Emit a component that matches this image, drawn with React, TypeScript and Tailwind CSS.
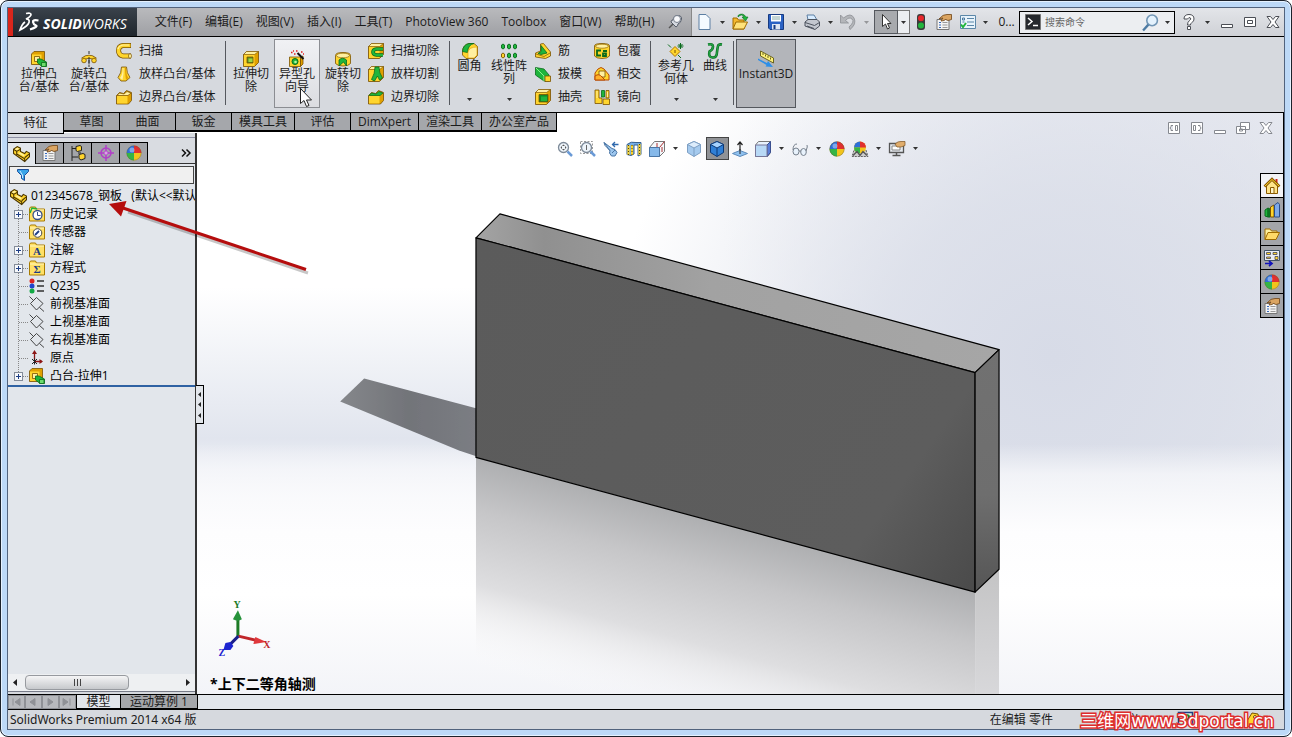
import type { ReactNode } from "react";
import clsx from "clsx";

const Y = "#ffd52e";
const YL = "#fff0a0";
const YD = "#e0a000";
const O = "#7a5200";
const G = "#1fb53c";
const GD = "#0a6b1c";

const Svg = ({ children, className = "size-4", box = "0 0 16 16" }: { children: ReactNode; className?: string; box?: string }) => (
  <svg viewBox={box} className={clsx("shrink-0 overflow-visible", className)} fill="none" aria-hidden="true">
    {children}
  </svg>
);

const Caret = ({ className = "" }: { className?: string }) => (
  <svg viewBox="0 0 5 3" width="5" height="3" className={clsx("shrink-0", className)} aria-hidden="true">
    <path d="M0 0h5L2.5 3z" fill="#333" />
  </svg>
);

const Cube = ({ inner }: { inner?: ReactNode }) => (
  <>
    <path d="M.5 3.500l3-3h12v11l-4 4H.5z" fill={YD} stroke={O} strokeWidth=".8" />
    <path d="M.5 3.500l3-3h12l-4 3z" fill={YL} stroke={O} strokeWidth=".6" />
    <path d="M1 4h10.500v11H1z" fill={Y} />
    {inner}
  </>
);

/* ribbon icons */
const ExtrudeIcon = () => (
  <Svg>
    <path d="M.5 3l2.500-2.500h10.500v10L10.500 13.500H.5z" fill={YD} stroke={O} strokeWidth=".8" />
    <path d="M1 3.500h9.500V13H1z" fill={Y} />
    <path d="M3.500 5.500h5v5h-5z" fill={YL} stroke={O} strokeWidth=".8" />
    <path d="M6.500 8h3.500l5.500 3v4.500h-4.500L6.500 12z" fill={G} stroke={GD} strokeWidth=".8" />
    <path d="M10.500 11.500h4.500v4h-4.500z" fill="#6ddc6e" stroke={GD} strokeWidth=".8" />
  </Svg>
);
const RevolveIcon = () => (
  <Svg>
    <path d="M8 0v16" stroke="#333" strokeDasharray="3 1.500" />
    <path d="M1.500 8.500Q8 3 14.500 8.500" stroke={O} strokeWidth="4" />
    <path d="M1.500 8.500Q8 3 14.500 8.500" stroke={Y} strokeWidth="2.500" />
    <circle cx="3" cy="9.500" r="2.300" fill={Y} stroke={O} strokeWidth=".8" />
    <circle cx="13" cy="9.500" r="2.300" fill={Y} stroke={O} strokeWidth=".8" />
    <path d="M8 6v7" stroke="#333" />
  </Svg>
);
const SweepIcon = () => (
  <Svg>
    <path d="M15 2.500H7Q2.500 3 2.500 7.500T7 13h8" stroke={O} strokeWidth="5" />
    <path d="M14.500 2.500H7Q2.500 3 2.500 7.500T7 13h7.500" stroke={Y} strokeWidth="3.600" />
    <path d="M13 2H7Q3 2.500 2 6" stroke={YL} strokeWidth="1.200" />
    <ellipse cx="14" cy="13" rx="1.500" ry="2.300" fill={YL} stroke={O} strokeWidth=".7" />
  </Svg>
);
const LoftIcon = () => (
  <Svg>
    <path d="M5.500 1h5q0 6 3.500 10.500l-4 3.500H5l-3-3.500Q5.500 7 5.500 1z" fill={Y} stroke={O} strokeWidth=".8" />
    <path d="M6.500 2q.5 6-2.500 10l2.500 2q1.500-6 1-12z" fill={YL} />
    <path d="M10 2q0 7 2.500 10L10 14q-1-6-1-12z" fill={YD} />
  </Svg>
);
const BoundaryIcon = ({ green }: { green?: boolean }) => (
  <Svg>
    <path d="M.5 6.500l3-3 4 1 3-3 5 2v8l-3 3.500H.5z" fill={YD} stroke={O} strokeWidth=".8" />
    <path d="M1 7h10.500v7.500H1z" fill={Y} />
    <path d="M1 6.500L3.500 4l4.500 1 3-2.500 4 1.500-3 2.500z" fill={green ? G : YL} stroke={green ? GD : O} strokeWidth=".7" />
  </Svg>
);
const CutExtrudeIcon = () => (
  <Svg>
    <Cube inner={<><path d="M4 6h6v6H4z" fill="#578b1e" stroke={O} strokeWidth=".8" /><path d="M5.500 7.500h4V11h-4z" fill="#9ed545" /></>} />
  </Svg>
);
const HoleWizardIcon = () => (
  <Svg>
    <path d="M.5 6h11v9.500H.5z" fill={Y} stroke={O} strokeWidth=".8" />
    <path d="M11.500 6l2.500-1v8l-2.500 2.500z" fill={YD} stroke={O} strokeWidth=".8" />
    <circle cx="6" cy="10.500" r="3" fill={G} stroke={GD} />
    <circle cx="6.500" cy="11" r="1.300" fill="#b7f5a0" />
    <path d="M8.500 2l6 6" stroke="#111" strokeWidth="2" />
    <path d="M2 1.500h1.500M5 3h1.500M4 0h1M7 0h1.500M12 1h1.500M14 3h1" stroke="#e02020" strokeWidth="1.400" />
  </Svg>
);
const CutRevolveIcon = () => (
  <Svg>
    <path d="M.5 4.500q0-3 7.500-3t7.500 3v8q-2 2.500-7.500 2.500T.5 12.500z" fill={Y} stroke={O} strokeWidth=".8" />
    <ellipse cx="8" cy="4.500" rx="6.500" ry="2.300" fill={YL} stroke={O} strokeWidth=".6" />
    <path d="M4 15V9q3.500-3.500 7.500 0v6l-3-4z" fill={G} stroke={GD} strokeWidth=".8" />
  </Svg>
);
const CutSweepIcon = () => (
  <Svg>
    <Cube inner={<path d="M15 6H8.500Q5 6.500 5 9t3.500 3H15" stroke={GD} strokeWidth="3.600" />} />
    <path d="M15 6H8.500Q5 6.500 5 9t3.500 3H15" stroke={G} strokeWidth="2.200" />
  </Svg>
);
const CutLoftIcon = () => (
  <Svg>
    <Cube />
    <path d="M7 1h4q0 6 3.500 11l-3 2-2-4-3 5-3-1.500Q7 7.500 7 1z" fill={G} stroke={GD} strokeWidth=".8" />
  </Svg>
);
const FilletIcon = () => (
  <Svg>
    <path d="M.5 8Q1 2 7 .5h5l3.500 3v9l-3 3H4L.5 12z" fill={Y} stroke={O} strokeWidth=".8" />
    <path d="M.5 8.500Q1 1.500 7 .5h5q-6 1-6.500 9z" fill={G} stroke={GD} strokeWidth=".8" />
    <path d="M6 9Q7 4 15 4v8l-3 3H6z" fill={YL} stroke={YD} strokeWidth=".6" />
  </Svg>
);
const PatternIcon = () => (
  <Svg>
    {[2, 8, 14].map((x) => (
      <g key={x}>
        <path d={`M${x - 1.500} 2q1.500-2 3 0v3q-1.500 2-3 0z`} fill={G} stroke={GD} strokeWidth=".9" />
        <path d={`M${x - 1.500} 11q1.500-2 3 0v3q-1.500 2-3 0z`} fill={x === 2 ? Y : G} stroke={x === 2 ? O : GD} strokeWidth=".9" />
      </g>
    ))}
  </Svg>
);
const RibIcon = () => (
  <Svg>
    <path d="M.5 10l5-2V1l3-.5L15.500 9v4l-5 2.500L.5 14z" fill={Y} stroke={O} strokeWidth=".8" />
    <path d="M6 2.500l6 7.500-6 1.500-3-1 3-2z" fill={G} stroke={GD} strokeWidth=".8" />
    <path d="M1 11l8 2.500L15 10" stroke={O} strokeWidth=".7" />
  </Svg>
);
const DraftIcon = () => (
  <Svg>
    <path d="M.5 1.500L9 3l5 6v6H9L.5 9z" fill={G} stroke={GD} strokeWidth=".8" />
    <path d="M1 2l8 8V15" stroke="#8eef8c" />
    <path d="M10 10h5.500v5.500H10z" fill={Y} stroke={O} strokeWidth=".8" />
  </Svg>
);
const ShellIcon = () => (
  <Svg>
    <Cube inner={<path d="M4 5.500h9V13H4z" fill="#118a25" stroke={O} strokeWidth=".8" />} />
    <path d="M6 7.500h6V12H6z" fill={G} />
  </Svg>
);
const WrapIcon = () => (
  <Svg>
    <path d="M.5 3q0-2.500 7.500-2.500T15.500 3v10q-2 2.500-7.500 2.500T.5 13z" fill={Y} stroke={O} strokeWidth=".8" />
    <ellipse cx="8" cy="3.200" rx="6.500" ry="2" fill={YL} stroke={O} strokeWidth=".6" />
    <path d="M7 7.500H3v5h4M9 8h4M9 10.500h3V13H9z" stroke={GD} strokeWidth="1.800" />
  </Svg>
);
const IntersectIcon = () => (
  <Svg>
    <path d="M1 7l3-4q3-3 6 0l5 6v5H1z" fill={Y} stroke="#b84a00" />
    <path d="M5 5h6v6H5z" fill={YL} stroke={O} strokeWidth=".8" />
    <path d="M1 10q4-3 7 1l3 3H1z" fill="#ffb02a" stroke="#b84a00" />
  </Svg>
);
const MirrorIcon = () => (
  <Svg>
    <path d="M1 1h4v8h3v5.500H1z" fill={Y} stroke={O} strokeWidth=".8" />
    <path d="M7.500 1.500h3v6.500h-3z" fill={G} stroke={GD} strokeWidth=".8" />
    <path d="M12 1.500h3V9h-3zM9 10h6.500v5.500H9z" fill={Y} stroke={O} strokeWidth=".8" />
    <path d="M3 2v7M13.500 3v5" stroke={YL} />
  </Svg>
);
const RefGeomIcon = () => (
  <Svg>
    <path d="M7 3.500L12 8.500 7 13.500 2 8.500z" fill={Y} stroke="#b07800" />
    <path d="M7 7v3" stroke={O} />
    <path d="M0 1.500l3 3M10 12l3 3M12.500 0v6M9.500 3h6M10.500 1l4 4M14.500 1l-4 4" stroke={GD} />
  </Svg>
);
const CurveIcon = () => (
  <Svg>
    <path d="M1 1.500q5-1 5 2t-3.500 5Q1 14 5.500 14.500T10 9q.5-4 1-6t4-1.500" stroke={GD} strokeWidth="2.600" />
    <path d="M1 1.500q5-1 5 2t-3.500 5Q1 14 5.500 14.500T10 9q.5-4 1-6t4-1.500" stroke="#22a045" strokeWidth="1.400" />
  </Svg>
);
const InstantIcon = () => (
  <Svg>
    <path d="M2.500 0l13 7v5L2.500 5z" fill="#fff27a" stroke="#6b6420" />
    <path d="M5 2v2M7.500 3.500v2M10 5v2M12.500 6.500v2" stroke="#6b6420" />
    <path d="M0 7.500L9 12l1-2 5 6-7.500-.5 1-1.500L0 9z" fill="#2d8fe8" />
  </Svg>
);

/* shared icons */
const BallIcon = () => (
  <Svg>
    <circle cx="8" cy="8" r="7.500" fill="#f2c41c" />
    <path d="M8 8V.5A7.500 7.500 0 0 0 .5 8z" fill="#2d6fd8" />
    <path d="M8 8V.5A7.500 7.500 0 0 1 15.500 8z" fill="#e03030" />
    <path d="M8 8H.5A7.500 7.500 0 0 0 8 15.500z" fill="#35b545" />
    <circle cx="6" cy="5" r="2.500" fill="#fff" opacity=".4" />
    <circle cx="8" cy="8" r="7.200" stroke="#555" strokeOpacity=".5" strokeWidth=".7" />
  </Svg>
);
const PartIcon = () => (
  <Svg className="size-[17px]">
    <path d="M.5 4L4 1.500l3 1.500v3l4 2 1.500-2 3 1.500v3.500L11 15.500.5 8z" fill={Y} stroke="#4a3500" />
    <path d="M.5 4l3 2v3.500M3.500 6L7 4M3.500 8.500L11 13v2.500M11 12l4-3.500" stroke="#4a3500" />
    <path d="M1.500 4L4 2.500 6 3.500 3.500 5zM7 7l4 2.500-1 1L4.500 7.500z" fill={YL} />
  </Svg>
);
const PropsIcon = () => (
  <Svg>
    <path d="M1 5.500h12v10H1z" fill="#f4f4f4" stroke="#777" />
    <path d="M3 8.500h2M3 11h2M3 13.500h2" stroke="#3366bb" />
    <path d="M6.500 8.500h5M6.500 11h5M6.500 13.500h5" stroke="#999" />
    <path d="M3 5Q7 0 11 .5h4.500v5L12 6.500q-3-2-4 0L5 7q1-2 2-3z" fill="#dba562" stroke="#6f4415" strokeWidth=".8" />
  </Svg>
);
const FolderIcon = () => (
  <Svg>
    <path d="M1 13.500V3h5l1.500 2H13v2" fill={YL} stroke="#a06c00" />
    <path d="M1 13.500L4 6.500h11.500L12 13.500z" fill="#ffd968" stroke="#a06c00" />
  </Svg>
);

const LargeTool = ({ icon, lines, className, top, caret, children }: { icon: ReactNode; lines: string[]; className: string; top?: boolean; caret?: boolean; children?: ReactNode }) => (
  <button type="button" className={clsx("relative flex h-[69px] flex-col items-center border text-center leading-[13px]", top ? "pt-[3px]" : "pt-[11px]", className)}>
    {icon}
    {lines.map((l) => (
      <span key={l} className="whitespace-nowrap">{l}</span>
    ))}
    {caret && <Caret className="mt-auto mb-1.5" />}
    {children}
  </button>
);

const SmallTools = ({ items, className }: { items: [ReactNode, string][]; className?: string }) => (
  <div className={clsx("flex flex-col", className)}>
    {items.map(([icon, label]) => (
      <button key={label} type="button" className="flex h-[23px] items-center gap-[7px] whitespace-nowrap">
        {icon}
        {label}
      </button>
    ))}
  </div>
);

const Divider = () => <div className="mt-0.5 h-16 w-px shrink-0 bg-[#55585e]" />;

const MENUS = ["文件(F)", "编辑(E)", "视图(V)", "插入(I)", "工具(T)", "PhotoView 360", "Toolbox", "窗口(W)", "帮助(H)"];
const TABS = ["特征", "草图", "曲面", "钣金", "模具工具", "评估", "DimXpert", "渲染工具", "办公室产品"];

const TitleTool = ({ label, children, className = "w-5" }: { label: string; children: ReactNode; className?: string }) => (
  <button type="button" aria-label={label} className={clsx("flex h-6 shrink-0 items-center justify-center", className)}>
    {children}
  </button>
);

const WindowGlyph = ({ kind, color = "#4b4e55" }: { kind: string; color?: string }) => (
  <Svg className="size-3.5" box="0 0 14 14">
    <g stroke={color} fill="#fff">
      {kind === "min" && <path d="M1.500 9.500h11v3h-11z" />}
      {kind === "max" && <path d="M1.500 2.500h11v9h-11zM4.500 5.500h5v3h-5z" />}
      {kind === "restore" && <path d="M4.500 1.500h9v7h-9zM.5 5.500h9v7h-9zM3.500 8h3v2h-3z" />}
      {kind === "close" && <path d="M1 1.500h3.500L7 4.500l2.500-3H13L9 7l4 5.500H9.500L7 9.500l-2.500 3H1L5 7z" />}
      {kind === "left" && <path d="M1.500 1.500h11v11h-11zM8.500 4.500h2v5h-2zM6 4.500H4v1L3 7l1 1.500v1h2" />}
      {kind === "right" && <path d="M1.500 1.500h11v11h-11zM3.500 4.500h2v5h-2zM8 4.500h2v1L11 7l-1 1.500v1H8" />}
    </g>
  </Svg>
);

const TitleBar = () => (
  <header className="flex h-7 shrink-0 items-stretch bg-gradient-to-b from-[#e3e5e9] to-[#cfd1d6]">
    <div className="flex items-center gap-1 border-l-[5px] border-[#d9261c] bg-gradient-to-b from-[#3a424b] to-[#1f262d] pr-2.5 pl-1.5 text-white">
      <Svg className="h-5 w-5" box="0 0 20 20">
        <path d="M7 1.500q5-1 5 1T7 7q4 0 3 3.500T1 18q2-6 5-8" stroke="#fff" strokeWidth="1.700" />
        <path d="M19.500 8.500q-6-1-5.500 1.500t3 3.500-6 4" stroke="#fff" strokeWidth="2.200" />
      </Svg>
      <span className="mt-1 text-[14px] leading-4 italic"><b>SOLID</b>WORKS</span>
    </div>
    <nav className="flex items-center gap-[13px] border-r border-[#888] bg-gradient-to-b from-[#b9babd] to-[#9fa0a4] pr-2 pl-[18px] whitespace-nowrap">
      {MENUS.map((m) => (
        <button key={m} type="button">{m}</button>
      ))}
      <button type="button" aria-label="固定">
        <Svg>
          <path d="M2 14l4-4" stroke="#555" strokeWidth="1.500" />
          <path d="M4 8l5 5q2-1 2-3 3-1 3.500-5T9 1.500Q6 3 6 6 4 6 4 8z" fill="#d5d9e0" stroke="#555c68" />
          <circle cx="10" cy="5" r="3.500" fill="#f8f9fb" stroke="#777f8c" />
        </Svg>
      </button>
    </nav>
    <div className="flex items-center pl-0.5">
      {[
        ["新建", <path key="n" d="M3 .5h7l4 4v11H3z" fill="#f4faff" stroke="#5c7fa3" />],
        ["打开", <g key="o"><path d="M1 15V4h4l1.500 2H12v9z" fill="#f5b82e" stroke="#a06c00" /><path d="M1 15l3-7h11.500L12 15z" fill="#ffe27a" stroke="#a06c00" /><path d="M6 3q4-4 6 0h-2l3.500 4L16 3h-2Q11-2 6 1.500z" fill={G} stroke={GD} strokeWidth=".6" /></g>],
        ["保存", <g key="s"><path d="M.5.5h15v15H2l-1.500-1.500z" fill="#2b62c4" stroke="#173a80" /><path d="M3 1h10v6.500H3z" fill="#fff" /><path d="M4 3h8M4 5h8" stroke="#8aa" /><path d="M4 10h8v5.500H4z" fill="#dfe6f2" /><path d="M5.500 11h2v4h-2z" fill="#173a80" /></g>],
        ["打印", <g key="p"><path d="M4 6L3 1h7l3 5z" fill="#d8ecff" stroke="#5c7fa3" /><path d="M1 8l3-2.500h9l2.500 2.500v4L11 15.500 1 12z" fill="#c3c7cf" stroke="#4d535e" /><path d="M1 8.500l9.500 3 5-3M3 12l7 2.500" stroke="#4d535e" /></g>],
        ["撤销", <path key="u" d="M.5 1v8h8L5.500 6.500Q9 2.500 12 5t-3 8l1 2.500Q17 10 14 4T3.500 4z" fill="#b4b6ba" stroke="#8d8f94" strokeWidth=".8" />],
      ].map(([label, art]) => (
        <div key={label as string} className="flex items-center">
          <TitleTool label={label as string}><Svg>{art}</Svg></TitleTool>
          <button type="button" aria-label={`${label}选项`} className={clsx("flex w-4 justify-center", label === "撤销" && "opacity-40")}><Caret /></button>
        </div>
      ))}
      <TitleTool label="选择" className="w-6 border border-[#55585e] bg-[#a8aaae]">
        <Svg><path d="M4.500.5v12l3-2.500 2 5 2-1-2-4.500h3.500z" fill="#fff" stroke="#333" /></Svg>
      </TitleTool>
      <TitleTool label="选择选项" className="w-3 border border-l-0 border-[#777] bg-[#eceef1]"><Caret /></TitleTool>
      <TitleTool label="重建模型" className="w-[22px]">
        <Svg>
          <rect x="4" y="0" width="8" height="16" rx="3" fill="#3a3a3a" />
          <circle cx="8" cy="4.200" r="3" fill="#e8262b" />
          <circle cx="8" cy="11.500" r="3" fill="#22b53c" />
        </Svg>
      </TitleTool>
      <TitleTool label="文件属性" className="w-6"><PropsIcon /></TitleTool>
      <TitleTool label="选项" className="w-6">
        <Svg><path d="M.5 1.500h15v13H.5z" fill="#e8f3fb" stroke="#5b87a8" /><path d="M2.500 4h2v2h-2zM2.500 8h2" stroke="#4a7aa0" /><path d="M7 4.500h7M7 8h7M7 11.500h7" stroke="#5b87a8" /><path d="M1 10.500l2 2.500 3-4" stroke={G} strokeWidth="2" /></Svg>
      </TitleTool>
      <button type="button" aria-label="更多" className="flex w-2.5 justify-center"><Caret /></button>
      <span className="pl-2">0...</span>
    </div>
    <div className="ml-auto flex items-center">
      <label className="flex h-[23px] w-[156px] items-center border border-black bg-[#eceef1] pr-1 pl-[5px]">
        <Svg><path d="M.5.5h15v15H.5z" fill="#26292e" stroke="#777" /><path d="M3 4l4 3.500L3 11M8 11.500h5" stroke="#fff" strokeWidth="1.500" /></Svg>
        <input aria-label="搜索命令" placeholder="搜索命令" className="min-w-0 flex-1 bg-transparent pl-1 text-[10px] outline-none placeholder:text-[#666]" />
        <Svg className="size-[17px]"><circle cx="9.500" cy="6" r="5" fill="#e4f2fd" stroke="#7296b5" strokeWidth="1.500" /><path d="M6 10l-5 5.500" stroke="#4d7ba3" strokeWidth="2.200" /></Svg>
        <Caret className="ml-1.5" />
      </label>
      <TitleTool label="帮助" className="ml-1 w-5">
        <Svg><path d="M3 5Q3 .5 8 .5T13 5q0 2-2 3.500T9.500 11h-3q0-3 2-4.500T9.500 4Q8 2.500 6.500 5zM6.500 12.500h3v3h-3z" fill="#fff" stroke="#4b4e55" /></Svg>
      </TitleTool>
      <button type="button" aria-label="帮助选项" className="flex w-4 justify-center"><Caret /></button>
      <TitleTool label="最小化" className="w-[23px]"><WindowGlyph kind="min" /></TitleTool>
      <TitleTool label="最大化" className="w-[23px]"><WindowGlyph kind="max" /></TitleTool>
      <TitleTool label="关闭" className="w-[23px]"><WindowGlyph kind="close" /></TitleTool>
    </div>
  </header>
);

const Ribbon = () => (
  <div className="flex h-[77px] shrink-0 items-start border-y border-t-black border-b-black bg-[#d6d9de] pt-0.5 pl-1.5">
    <LargeTool icon={<ExtrudeIcon />} lines={["拉伸凸", "台/基体"]} className="w-[50px] border-transparent" />
    <LargeTool icon={<RevolveIcon />} lines={["旋转凸", "台/基体"]} className="w-[50px] border-transparent" />
    <SmallTools className="w-[111px] pl-0.5" items={[[<SweepIcon />, "扫描"], [<LoftIcon />, "放样凸台/基体"], [<BoundaryIcon />, "边界凸台/基体"]]} />
    <Divider />
    <LargeTool icon={<CutExtrudeIcon />} lines={["拉伸切", "除"]} className="ml-[2px] w-[46px] border-transparent" />
    <LargeTool icon={<HoleWizardIcon />} lines={["异型孔", "向导"]} className="w-[46px] border-[#8b8d92] bg-gradient-to-b from-[#f0f1f4] to-[#dcdde1]">
      <Svg className="absolute top-12 left-[25px] h-5 w-3" box="0 0 12 20">
        <path d="M.5.5v15l3.500-3 2.500 6 2.500-1-2.500-5.500h5z" fill="#fff" stroke="#222" />
      </Svg>
    </LargeTool>
    <LargeTool icon={<CutRevolveIcon />} lines={["旋转切", "除"]} className="w-[46px] border-transparent" />
    <SmallTools className="w-[83px] pl-0.5" items={[[<CutSweepIcon />, "扫描切除"], [<CutLoftIcon />, "放样切割"], [<BoundaryIcon green />, "边界切除"]]} />
    <Divider />
    <LargeTool top caret icon={<FilletIcon />} lines={["圆角"]} className="w-[39px] border-transparent" />
    <LargeTool top caret icon={<PatternIcon />} lines={["线性阵", "列"]} className="w-[40px] border-transparent" />
    <SmallTools className="w-[59px] pl-1.5" items={[[<RibIcon />, "筋"], [<DraftIcon />, "拔模"], [<ShellIcon />, "抽壳"]]} />
    <SmallTools className="w-[62px] pl-1.5" items={[[<WrapIcon />, "包覆"], [<IntersectIcon />, "相交"], [<MirrorIcon />, "镜向"]]} />
    <Divider />
    <LargeTool top caret icon={<RefGeomIcon />} lines={["参考几", "何体"]} className="ml-1 w-[42px] border-transparent" />
    <LargeTool top caret icon={<CurveIcon />} lines={["曲线"]} className="w-9 border-transparent" />
    <Divider />
    <LargeTool icon={<InstantIcon />} lines={["Instant3D"]} className="ml-0.5 w-[60px] border-[#55585e] bg-[#b3b5ba]" />
  </div>
);

const Branch = ({ plus, last }: { plus?: boolean; last?: boolean }) => (
  <svg width="20" height="18" className="shrink-0" aria-hidden="true">
    <path d={last ? "M9.500 0v9" : "M9.500 0v18"} stroke="#888" strokeDasharray="1 1" />
    <path d="M10 9.500h9" stroke="#888" strokeDasharray="1 1" />
    {plus && (
      <>
        <rect x="5.500" y="5.500" width="8" height="8" fill="#f6f8fb" stroke="#848c99" />
        <path d="M7 9.500h5M9.500 7v5" stroke="#1d3d85" />
      </>
    )}
  </svg>
);

const TreeFolder = ({ children }: { children: ReactNode }) => (
  <Svg>
    <path d="M.5 15V2.500l1-1.500h5l1 2h8v12z" fill="#ffe066" stroke="#a87b00" />
    <path d="M1 4h14" stroke="#fff6c0" />
    {children}
  </Svg>
);

const PlaneIcon = () => (
  <Svg><path d="M7.500 1.500l6.500 6-6.500 6.500-6-6.500zM.5.5l4 4M10.500 11.500l4.500 4" stroke="#333" strokeWidth=".9" /></Svg>
);

const TREE: { label: string; icon: ReactNode; plus?: boolean }[] = [
  { label: "历史记录", plus: true, icon: <TreeFolder><circle cx="8.500" cy="9" r="4.500" fill="#fff" stroke="#334d8c" strokeWidth="1.300" /><path d="M8.500 6v3.500h3" stroke="#334d8c" /><path d="M1 7l2-5 5 1" stroke={G} strokeWidth="1.500" /></TreeFolder> },
  { label: "传感器", icon: <TreeFolder><circle cx="8.500" cy="9" r="4.300" fill="#fff" stroke="#444" /><path d="M6 11l4-4" stroke="#1d3d85" strokeWidth="1.800" /></TreeFolder> },
  { label: "注解", plus: true, icon: <TreeFolder><text x="8" y="13" textAnchor="middle" fontSize="11" fontWeight="700" fontFamily="Liberation Serif, serif" fill="#1d3d85">A</text></TreeFolder> },
  { label: "方程式", plus: true, icon: <TreeFolder><text x="8" y="13" textAnchor="middle" fontSize="11" fontWeight="700" fontFamily="Liberation Serif, serif" fill="#1d3d85">Σ</text></TreeFolder> },
  { label: "Q235", icon: <Svg><circle cx="3" cy="3" r="2.500" fill="#d22" /><circle cx="3" cy="8" r="2.500" fill="#24c" /><circle cx="3" cy="13" r="2.500" fill="#1a4" /><path d="M8 3h7M8 8h7M8 13h7" stroke="#333" strokeWidth="1.500" /></Svg> },
  { label: "前视基准面", icon: <PlaneIcon /> },
  { label: "上视基准面", icon: <PlaneIcon /> },
  { label: "右视基准面", icon: <PlaneIcon /> },
  { label: "原点", icon: <Svg><path d="M5.500 11V2M6 11.500h7" stroke="#8c1515" strokeWidth="1.300" /><path d="M5.500 0L8 4H3zM14 11.500L10.500 9v5z" fill="#8c1515" /><path d="M3 9l5 5M8 9l-5 5M5.500 8.500v6" stroke="#222" /></Svg> },
  { label: "凸台-拉伸1", plus: true, icon: <ExtrudeIcon /> },
];

const PANEL_TABS: [string, ReactNode][] = [
  ["设计树", <PartIcon />],
  ["属性", <PropsIcon />],
  ["配置", <Svg><path d="M2 1v15M2 3.500h5M2 12h6M8 8h3" stroke="#222" /><path d="M6 1.500l4-1 1.500 1v4l-4 1L6 5.500zM9 9.500l4-1 2 1v4l-4 1.500-2-1.500z" fill={Y} stroke="#222" /></Svg>],
  ["尺寸专家", <Svg><circle cx="8" cy="8" r="5" stroke="#b13fc8" strokeWidth="1.500" /><path d="M8 0v16M0 8h16" stroke="#b13fc8" strokeWidth="1.500" /><path d="M8 5.500L10.500 8 8 10.500 5.500 8z" fill="#dba2e6" stroke="#b13fc8" /></Svg>],
  ["外观", <BallIcon />],
];

const Sidebar = () => (
  <aside className="relative flex w-[189px] shrink-0 flex-col border-r-2 border-[#333] bg-[#e2e6eb]">
    <div className="h-[9px] shrink-0 bg-[#d9dce1]">
      <div className="h-px w-14 bg-black" />
      <div className="mt-[3px] h-px bg-[#8d8fa3]" />
    </div>
    <div className="flex h-[22px] shrink-0 items-stretch border-b border-[#333] bg-[#d9dce1]">
      {PANEL_TABS.map(([label, icon], i) => (
        <button key={label} type="button" aria-label={label} className={clsx("flex w-7 items-center justify-center border-t border-r border-black", i ? "bg-[#a3a5a9]" : "-mb-px bg-[#e2e6eb]")}>
          {icon}
        </button>
      ))}
      <button type="button" aria-label="展开" className="mr-1 ml-auto">
        <Svg className="size-2.5" box="0 0 10 10"><path d="M1 1.500L4.500 5 1 8.500M5.500 1.500L9 5 5.500 8.500" stroke="#111" strokeWidth="1.500" /></Svg>
      </button>
    </div>
    <label className="mx-px mt-[2px] flex h-[18px] shrink-0 items-center border border-[#444] bg-[#f0f0f0] pl-[7px]">
      <Svg className="size-3" box="0 0 12 12"><path d="M.5.5h11v2L7.500 6.500v5l-3-2v-3L.5 2.500z" fill="#39a4e8" stroke="#1d4f9c" /><path d="M3 2l2.500 4v3" stroke="#cdeaff" /></Svg>
      <input aria-label="过滤" className="min-w-0 flex-1 bg-transparent outline-none" />
    </label>
    <div className="mt-[3px] overflow-hidden border-b-2 border-[#2f62a3] leading-[18px] whitespace-nowrap text-black">
      <div className="flex h-[18px] items-center gap-1 pl-[2px]">
        <PartIcon />
        <span className="whitespace-pre">012345678_钢板   (默认&lt;&lt;默认</span>
      </div>
      <ul>
        {TREE.map((n, i) => (
          <li key={n.label} className="flex h-[18px] items-center pl-px">
            <Branch plus={n.plus} last={i === TREE.length - 1} />
            {n.icon}
            <span className="pl-[5px]">{n.label}</span>
          </li>
        ))}
      </ul>
    </div>
    <button type="button" aria-label="折叠面板" className="absolute top-[252px] -right-[9px] z-10 flex h-[39px] w-2 flex-col items-center justify-evenly border border-l-0 border-black bg-[#e2e6eb]">
      {[0, 1, 2].map((n) => (
        <Svg key={n} className="h-[5px] w-[3px]" box="0 0 3 5"><path d="M3 0v5L0 2.500z" fill="#222" /></Svg>
      ))}
    </button>
    <div className="mt-auto flex h-[17px] items-center bg-[#eef0f2] px-1">
      <Svg className="size-[7px]" box="0 0 7 7"><path d="M5 0v7L1 3.500z" fill="#222" /></Svg>
      <div className="ml-1.5 flex h-[15px] w-[104px] items-center justify-center gap-0.5 rounded-sm border border-[#979a9f] bg-gradient-to-b from-[#f5f5f6] to-[#c7c9cc]">
        <i className="h-[7px] w-px bg-[#444]" />
        <i className="h-[7px] w-px bg-[#444]" />
        <i className="h-[7px] w-px bg-[#444]" />
      </div>
      <Svg className="ml-auto size-[7px]" box="0 0 7 7"><path d="M2 0v7l4-3.500z" fill="#222" /></Svg>
    </div>
    <div className="h-[3px] border-t border-[#777b88] bg-[#d6d9de]" />
  </aside>
);

const Magnify = ({ area }: { area?: boolean }) => (
  <Svg>
    {area && <path d="M.5.5h12v12H.5z" stroke="#999" strokeDasharray="2 1.500" />}
    <circle cx="6.500" cy="6.500" r="5" fill="#eef4fa" stroke="#7d8a99" strokeWidth="1.300" />
    {area ? <path d="M6.500 4v5" stroke="#666" /> : <path d="M6.500 3.500l1.500 1.500H5zM6.500 9.500L8 8H5zM3.500 6.500L5 5v3zM9.500 6.500L8 5v3z" fill="#555" />}
    <path d="M10.500 10.500l4.500 4.500" stroke="#6a9ad6" strokeWidth="2.500" />
  </Svg>
);

const BlueCube = ({ dark }: { dark?: boolean }) => (
  <Svg>
    <path d="M8 .5l6.500 3v8L8 15.500l-6.500-4v-8z" fill={dark ? "#2f7fd6" : "#a5caee"} stroke={dark ? "#0d3a78" : "#7d9fc4"} />
    <path d="M8 .5l6.500 3L8 7 1.500 3.500z" fill={dark ? "#a5d2ff" : "#dcecfb"} stroke={dark ? "#0d3a78" : "#7d9fc4"} />
    <path d="M8 7v8.500" stroke={dark ? "#0d3a78" : "#7d9fc4"} />
  </Svg>
);

const HUD: { label: string; icon: ReactNode; caret?: boolean; on?: boolean }[] = [
  { label: "整屏显示全图", icon: <Magnify /> },
  { label: "局部放大", icon: <Magnify area /> },
  { label: "上一视图", icon: <Svg><path d="M1 1.500l8 6 3 1 2 3-2 3.500H8.500L6.500 12l.5-2z" fill="#9cc6ee" stroke="#4a76a6" /><path d="M1 1.500l1 3 5 5M9 12l3-3" stroke="#4a76a6" /><path d="M15.500 3.500H10M12 1L9.500 3.500 12 6" stroke="#2f69ad" strokeWidth="1.300" /></Svg> },
  { label: "剖面视图", icon: <Svg><path d="M1 3.500Q5 0 10 1.500h5v12l-3 1.500V4H8v9l-3 1.500-4-1z" fill="#76aee6" stroke="#37618f" /><path d="M2.500 4v10M6 4v10M13.500 3v11" stroke={Y} strokeWidth="2.200" /><path d="M2.500 4v10M6 4v10M13.500 3v11" stroke="#554400" strokeDasharray="1 2" /></Svg> },
  { label: "视图定向", caret: true, icon: <Svg><path d="M.5 6.500L5.500.5h10v10l-5 5H.5z" fill="#f5f8fb" stroke="#777" /><path d="M.5 6.500h10v9H.5z" fill="#86b9ea" stroke="#4a76a6" /><path d="M10.500 6.500l5-6M8 2v4M13 6v5" stroke="#a33" /></Svg> },
  { label: "等轴测", icon: <BlueCube /> },
  { label: "带边线上色", on: true, icon: <BlueCube dark /> },
  { label: "正视于", icon: <Svg><path d="M8 12V1M5.500 4L8 1l2.500 3" stroke="#222" strokeWidth="1.200" /><path d="M8 9.500l7.500 3L8 15.500.5 12.500z" fill="#8fc1ef" stroke="#5d8bbb" /><path d="M8 8v5" stroke="#222" /></Svg> },
  { label: "显示样式", caret: true, icon: <Svg><path d="M.5 4l3-3.500h12v11l-3 4H.5z" fill="#e8f2fc" stroke="#777" /><path d="M12 4l3.500-3.500v11L12 15.500z" fill="#5a7ed8" stroke="#3a4f8f" /><path d="M.5 4H12v11.500H.5z" fill="#b8d9f6" stroke="#779" /></Svg> },
  { label: "隐藏/显示项目", caret: true, icon: <Svg><ellipse cx="4" cy="10.500" rx="3" ry="3.500" fill="#e8f2fc" stroke="#76808c" /><ellipse cx="11.500" cy="11" rx="2.800" ry="3.500" fill="#e8f2fc" stroke="#76808c" /><path d="M7 10h2M1 9q0-6 4-6M14 10q2-5 1-6" stroke="#76808c" /></Svg> },
  { label: "编辑外观", icon: <BallIcon /> },
  { label: "应用布景", caret: true, icon: <Svg><path d="M2 9h12l2 6.500H0z" fill="#ccc" stroke="#666" strokeDasharray="2 1" /><circle cx="8" cy="6.500" r="6" fill="#f2c41c" /><path d="M8 6.500V.5a6 6 0 0 0-6 6z" fill="#2d6fd8" /><path d="M8 6.500V.5a6 6 0 0 1 6 6z" fill="#e03030" /><path d="M8 6.500H2a6 6 0 0 0 6 6z" fill="#35b545" /><path d="M1 14.500l4-4 3 4 3-4 4 4" stroke="#555" strokeWidth="1.300" /></Svg> },
  { label: "视图设定", caret: true, icon: <Svg><path d="M.5 2.500h14v9H.5z" fill="#e4e9ef" stroke="#555" strokeWidth="1.300" /><path d="M3 5h8v4H3z" fill="#fff" stroke="#888" /><path d="M7.500 12v2.500M3.500 14.500h8" stroke="#555" strokeWidth="1.500" /><path d="M6 3q3-3 6-2.500h4v4l-4 1.500H8z" fill="#e0ad6c" stroke="#7b5220" strokeWidth=".7" /></Svg> },
];

const TASK_TABS: [string, ReactNode][] = [
  ["资源", <Svg><path d="M2.500 8v7.500h11V8L8 2.500z" fill="#ffe58a" stroke="#8a5a00" /><path d="M11.500 1h2v4h-2z" fill="#c22" /><path d="M.5 8.500L8 1l7.500 7.500" stroke="#8a5a00" strokeWidth="2.500" /><path d="M1 8L8 1.500 15 8" stroke="#ffd52e" /><path d="M6.500 9.500h3.500v6H6.500z" fill="#fff7cc" stroke="#8a5a00" /></Svg>],
  ["设计库", <Svg><path d="M1 8l3-2v9l-3-1z" fill={G} stroke={GD} /><path d="M4 6l2 1v8H4z" fill="#0c8424" stroke={GD} /><path d="M6.500 5L10 3v12H6.500z" fill={Y} stroke={O} /><path d="M10.500 3L14 .5l1.500 2V15h-5z" fill="#7ea9e8" stroke="#2b4d8a" /></Svg>],
  ["文件探索器", <FolderIcon />],
  ["视图调色板", <Svg><path d="M.5.5h15v10H.5z" fill="#e9edf5" stroke="#456" /><path d="M2.500 2.500h4v2h-4zM9 2.500h4v2H9zM2.500 7h4v1.500h-4zM11 6.500h3v3h-3z" fill={Y} stroke="#445" strokeWidth=".8" /><path d="M1 13.500h6M5 11l3 2.500L5 16" stroke="#11b" strokeWidth="1.700" /></Svg>],
  ["外观、布景", <BallIcon />],
  ["自定义属性", <PropsIcon />],
];

const Scene = () => (
  <svg viewBox="197 133 1087 562" className="absolute inset-0 h-full w-full" role="img" aria-label="钢板">
    <defs>
      <linearGradient id="front" x1="476" y1="238" x2="976" y2="593" gradientUnits="userSpaceOnUse">
        <stop offset="0" stopColor="#5b5b5b" />
        <stop offset=".8" stopColor="#5d5d5d" />
        <stop offset="1" stopColor="#4a4a4a" />
      </linearGradient>
      <linearGradient id="top" x1="476" y1="0" x2="1000" y2="0" gradientUnits="userSpaceOnUse">
        <stop offset="0" stopColor="#a4a4a4" />
        <stop offset=".13" stopColor="#909090" />
        <stop offset=".45" stopColor="#a2a2a2" />
        <stop offset="1" stopColor="#a6a6a6" />
      </linearGradient>
      <linearGradient id="side" x1="0" y1="350" x2="0" y2="593" gradientUnits="userSpaceOnUse">
        <stop offset="0" stopColor="#717171" />
        <stop offset=".6" stopColor="#6e6e6e" />
        <stop offset="1" stopColor="#555" />
      </linearGradient>
      <linearGradient id="mirror" x1="476" y1="458" x2="423" y2="655" gradientUnits="userSpaceOnUse">
        <stop offset="0" stopColor="#aeafb1" />
        <stop offset=".25" stopColor="#c6c6c8" />
        <stop offset=".6" stopColor="#dedee0" />
        <stop offset="1" stopColor="#fcfcfd" stopOpacity="0" />
      </linearGradient>
      <linearGradient id="mirrorSide" x1="0" y1="570" x2="0" y2="730" gradientUnits="userSpaceOnUse">
        <stop offset="0" stopColor="#c4c4c5" />
        <stop offset="1" stopColor="#dddde0" />
      </linearGradient>
      <linearGradient id="shade" x1="340" y1="0" x2="476" y2="0" gradientUnits="userSpaceOnUse">
        <stop offset="0" stopColor="#85878b" />
        <stop offset=".5" stopColor="#727479" />
        <stop offset="1" stopColor="#7b7d83" />
      </linearGradient>
      <filter id="soft"><feGaussianBlur stdDeviation="0.7" /></filter>
    </defs>
    <path d="M364 379l113 30v48l-18-6-119-49z" fill="url(#shade)" filter="url(#soft)" />
    <path d="M476 458l500 135v102H476z" fill="url(#mirror)" />
    <path d="M976 593l24-23v125h-24z" fill="url(#mirrorSide)" />
    <g stroke="#000" strokeWidth="1.200" strokeLinejoin="round">
      <path d="M476 238l24-24 500 136-24 23z" fill="url(#top)" />
      <path d="M476 238l500 135v220L476 458z" fill="url(#front)" />
      <path d="M976 373l24-23v220l-24 23z" fill="url(#side)" />
    </g>
    <g strokeWidth="3">
      <path d="M237.500 637V620" stroke="#1d7a26" />
      <path d="M237.500 611l-5 9q5 3 9 0z" fill="#26933a" />
      <path d="M238 637l19 4.500" stroke="#c0262a" />
      <path d="M266 643l-11-5-2 7z" fill="#e0383c" />
      <path d="M238 637l-8 8" stroke="#1b1f8c" />
      <path d="M223 651l2-7 5-1 3 4-3 4z" fill="#1c24d0" />
    </g>
    <g fontFamily="Liberation Serif, serif" fontSize="10" fontWeight="700">
      <text x="233" y="609" fill="#1d7a26">Y</text>
      <text x="263" y="649" fill="#c0262a">X</text>
      <text x="218" y="657" fill="#1c24d0">Z</text>
    </g>
  </svg>
);

const Viewport = () => (
  <main className="relative flex min-w-0 flex-1 flex-col">
    <Scene />
    <div className="relative flex items-center justify-center pt-1 pr-1">
      {HUD.map((t) => (
        <div key={t.label} className="flex items-center">
          <button type="button" aria-label={t.label} className={clsx("flex size-[23px] items-center justify-center", t.on && "border border-[#444] bg-[#909296]")}>{t.icon}</button>
          {t.caret && <button type="button" aria-label={`${t.label}选项`} className="flex w-[14px] justify-center"><Caret /></button>}
        </div>
      ))}
    </div>
    <div className="absolute top-10 right-0 flex flex-col border-b border-l border-black">
      {TASK_TABS.map(([label, icon], i) => (
        <button key={label} type="button" aria-label={label} className={clsx("flex h-6 w-[22px] items-center justify-center border-t border-black", i ? "bg-[#a3a5a9]" : "bg-[#f2f3f6]")}>{icon}</button>
      ))}
    </div>
    <p className="relative mt-auto pl-[13px] text-[14px] leading-5 font-bold text-black">*上下二等角轴测</p>
  </main>
);

const App = () => {
  return (
    <div className="flex h-screen flex-col rounded-lg border border-[#1c222b] bg-[#bdd9f7] p-1.5 text-[12px] leading-4 text-[#1b1b1b] shadow-[inset_0_0_0_1px_#e6f2ff] [font-family:'Open_Sans','Noto_Sans_CJK_SC',sans-serif]">
      <div className="flex min-h-0 flex-1 flex-col border border-[#52637d]">
        <TitleBar />
        <Ribbon />
        <div className="relative flex min-h-0 flex-1 flex-col border-r border-black bg-[radial-gradient(ellipse_440px_400px_at_82%_42%,#d7dbe7_0%,#d9dde8cc_40%,#ffffff00_100%),radial-gradient(ellipse_560px_420px_at_100%_20%,#e6e8ef_0%,#e8eaf1cc_50%,#ffffff00_100%),linear-gradient(to_bottom,#ffffff_0%,#ffffff_30%,#e1e5ee_56%,#fbfbfd_66%,#ffffff_88%,#f3f4f8_100%)]">
          <div className="absolute inset-x-0 top-[57%] bottom-0 bg-[linear-gradient(to_bottom,#ffffff00_0%,#f6f7fad0_12%,#fdfdfe_35%,#ffffff_60%,#f3f4f8_100%)]" />
          <div className="relative flex h-5 shrink-0 items-start">
            {TABS.map((t, i) => (
              <button key={t} type="button" className={clsx("min-w-14 border-r border-black px-[7px] text-center whitespace-nowrap", i ? "h-[19px] border-b-2 bg-[#a5a7ab]" : "h-5 bg-[#d9dce1]")}>{t}</button>
            ))}
            <div className="mr-1.5 ml-auto flex pt-2">
              {["left", "right", "min", "restore", "close"].map((k) => (
                <button key={k} type="button" aria-label={k} className="flex w-[23px] justify-center"><WindowGlyph kind={k} color="#85888f" /></button>
              ))}
            </div>
          </div>
          <div className="relative flex min-h-0 flex-1">
            <Sidebar />
            <Viewport />
            <svg width="220" height="90" viewBox="100 190 220 90" className="pointer-events-none absolute top-[57px] left-[92px] z-20" aria-hidden="true">
              <path d="M128 212l180 61" stroke="#000" strokeOpacity=".22" strokeWidth="3" />
              <path d="M120 207l186 62.500" stroke="#b50d0d" strokeWidth="3" />
              <path d="M109 204l17.500-3-5.500 15.500z" fill="#b50d0d" />
            </svg>
          </div>
        </div>
        <div className="flex h-4 shrink-0 items-start border-y border-r border-black bg-[#e2e6eb]">
          {["M4 2v7M11 2L6 5.500 11 9z", "M9 2L4 5.500 9 9z", "M5 2l5 3.500L5 9z", "M10 2v7M3 2l5 3.500L3 9z"].map((d) => (
            <button key={d} type="button" aria-label="滚动标签" className="h-3.5 w-[17px] border border-[#8f9196] bg-[#b7b9bd]">
              <Svg className="h-3 w-3.5" box="0 0 14 11"><path d={d} fill="#8f9196" stroke="#8f9196" /></Svg>
            </button>
          ))}
          <button type="button" className="h-3.5 w-[45px] border-x border-b border-black bg-[#e2e6eb] leading-[13px]">模型</button>
          <button type="button" className="h-3.5 w-[77px] border-r border-b border-black bg-[#a5a7ab] leading-[13px]">运动算例 1</button>
        </div>
        <footer className="relative flex h-[19px] shrink-0 items-center bg-[#d6d9de] pl-[2px]">
          <span className="[font-family:'Noto_Sans','Noto_Sans_CJK_SC',sans-serif]">SolidWorks Premium 2014 x64 版</span>
          <div className="ml-auto flex items-center">
            <span>在编辑 零件</span>
            <span className="pl-[50px]">自定义</span>
            <Caret className="ml-5" />
            <Svg className="ml-3.5 size-4"><path d="M.5.5h14v12H.5z" fill="#dff0e0" stroke="#1d3d85" strokeWidth="1.500" /><path d="M5 5q0-2 3-2t3 2-3 3v2" stroke="#128a2a" strokeWidth="2" /></Svg>
            <Svg className="mr-6 ml-[50px] size-4"><path d="M8 1l6 1 1 5-6 6-7 2 1-6z" fill={Y} stroke={O} /><circle cx="11" cy="5" r="1.500" fill="#fff" stroke={O} /></Svg>
          </div>
          <span className="absolute right-2.5 bottom-0 text-[17px] leading-4 whitespace-nowrap text-white [-webkit-text-stroke:3px_#dd2c2c] [paint-order:stroke_fill] [font-family:'DejaVu_Sans','Noto_Sans_CJK_SC',sans-serif]">三维网www.3dportal.cn</span>
        </footer>
      </div>
    </div>
  );
};

export default App;
